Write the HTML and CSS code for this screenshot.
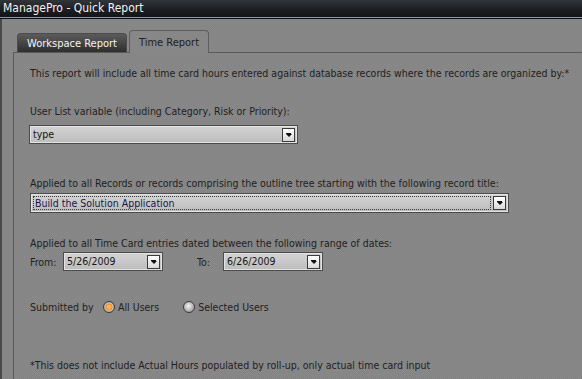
FILE: index.html
```html
<!DOCTYPE html>
<html lang="en">

<head>
    <meta charset="UTF-8">
    <meta name="viewport" content="width=device-width, initial-scale=1.0">
    <title>ManagePro - Quick Report</title>
    <link rel="stylesheet" href="styles.css">
</head>

<body>
    <div class="window">
        <div class="titleBar">ManagePro - Quick Report</div>
        <div class="client">
            <div class="tabs">
                <div class="tab">Workspace Report</div>
                <div class="tab active">Time Report</div>
            </div>
            <div class="panel">
                <p class="intro">This report will include all time card hours entered against database records where the records are organized by:*</p>

                <p class="label first">User List variable (including Category, Risk or Priority):</p>
                <div class="combo comboType">
                    <span class="comboText">type</span>
                    <span class="dropBtn"></span>
                </div>

                <p class="label second">Applied to all Records or records comprising the outline tree starting with the following record title:</p>
                <div class="combo comboTitle">
                    <span class="comboText focus">Build the Solution Application</span>
                    <span class="dropBtn"></span>
                </div>

                <p class="label third">Applied to all Time Card entries dated between the following range of dates:</p>
                <div class="dateRow">
                    <span class="dateLabel">From:</span>
                    <div class="combo comboDate">
                        <span class="comboText">5/26/2009</span>
                        <span class="dropBtn"></span>
                    </div>
                    <span class="dateLabel toLabel">To:</span>
                    <div class="combo comboDate">
                        <span class="comboText">6/26/2009</span>
                        <span class="dropBtn"></span>
                    </div>
                </div>

                <div class="radioRow">
                    <span class="radioLabel">Submitted by</span>
                    <span class="radio checked"></span>
                    <span class="radioText">All Users</span>
                    <span class="radio"></span>
                    <span class="radioText">Selected Users</span>
                </div>

                <p class="note">*This does not include Actual Hours populated by roll-up, only actual time card input</p>
            </div>
        </div>
    </div>
</body>

</html>
```

FILE: styles.css
```css
* {
    box-sizing: border-box;
}

body {
    margin: 0;
    width: 582px;
    height: 379px;
    overflow: hidden;
    background-color: #868686;
    font-family: "DejaVu Sans Condensed", "DejaVu Sans", sans-serif;
    font-stretch: condensed;
    font-size: 10.5px;
    color: #1e1e1e;
}

p {
    margin: 0;
    line-height: 14px;
    white-space: nowrap;
}

.window {
    display: flex;
    flex-direction: column;
    height: 379px;
}

/* 标题栏 */
.titleBar {
    height: 19px;
    padding: 0 0 0 3px;
    border-bottom: 1px solid #0c0d0f;
    background: linear-gradient(#31343a, #1b1d21 55%, #121316);
    box-shadow: inset 0 -1px 0 #8c98aa;
    font-size: 12px;
    line-height: 17px;
    color: #f2f2f2;
}

.client {
    flex: 1;
    display: flex;
    flex-direction: column;
    border-left: 2px solid #4a4a4a;
    background-color: #878787;
    background-image: repeating-conic-gradient(#8a8a8a 0 25%, #838383 0 50%);
    background-size: 2px 2px;
}

/* 选项卡 */
.tabs {
    display: flex;
    align-items: flex-end;
    gap: 2px;
    margin: 11px 0 0 15px;
}

.tab {
    height: 19px;
    padding: 0 9px;
    border: 1px solid #4a4a4a;
    border-bottom: none;
    border-radius: 4px 4px 0 0;
    background: linear-gradient(#5c5c5c, #2e2e2e);
    line-height: 19px;
    font-size: 11px;
    color: #f4f4f4;
}

.tab.active {
    position: relative;
    height: 23px;
    margin-bottom: -1px;
    padding: 0 9px;
    border-color: #5e5e5e;
    background: #878787;
    line-height: 23px;
    color: #1e1e1e;
}

.panel {
    flex: 1;
    margin-left: 11px;
    padding: 13px 0 0 16px;
    border-top: 1px solid #5a5a5a;
    border-left: 1px solid #5a5a5a;
}

.label.first {
    margin-top: 24px;
}

.label.second {
    margin-top: 32px;
}

.label.third {
    margin-top: 23px;
}

/* 下拉框 */
.combo {
    display: flex;
    align-items: center;
    height: 19px;
    padding: 2px;
    border: 1px solid #4c4c4c;
    background: linear-gradient(#d4d4d4, #bcbcbc);
    box-shadow: inset 0 0 0 1px #e2e2e2;
}

.comboText {
    flex: 1;
    padding-left: 1px;
    line-height: 13px;
    color: #151515;
}

.comboType {
    width: 269px;
    margin: 7px 0 0 -1px;
}

.comboTitle {
    width: 479px;
    height: 20px;
    margin-top: 3px;
}

.comboTitle .comboText {
    height: 14px;
    border: 1px dotted #3c3c3c;
    color: #161646;
}

.dropBtn {
    position: relative;
    width: 13px;
    height: 14px;
    margin-left: 2px;
    border: 1px solid #3a3a3a;
    background: linear-gradient(#ffffff, #d8d8d8);
}

.dropBtn::after {
    content: '';
    position: absolute;
    left: 3px;
    top: 5px;
    border-left: 3px solid transparent;
    border-right: 3px solid transparent;
    border-top: 3px solid #101010;
}

.dropBtn::before {
    content: '';
    position: absolute;
    left: 3px;
    top: 4px;
    width: 5px;
    height: 1px;
    background-color: #101010;
}

/* 日期 */
.dateRow {
    display: flex;
    align-items: center;
    margin-top: 2px;
}

.dateLabel {
    width: 33px;
}

.toLabel {
    width: 26px;
    margin-left: 34px;
}

.comboDate {
    width: 100px;
}

/* 单选 */
.radioRow {
    display: flex;
    align-items: center;
    margin-top: 29px;
    height: 14px;
}

.radioLabel {
    width: 73px;
}

.radio {
    width: 12px;
    height: 12px;
    margin-right: 3px;
    border: 1px solid #3c3c3c;
    border-radius: 50%;
    background: radial-gradient(circle at 45% 40%, #f4f4f4, #9a9a9a 80%);
}

.radio.checked {
    background: radial-gradient(circle, #ffb055 0 2px, #f08a1c 3px, #c8c8c8 4px, #8c8c8c 80%);
}

.radioText {
    margin-right: 24px;
}

.note {
    margin-top: 44px;
}
```
